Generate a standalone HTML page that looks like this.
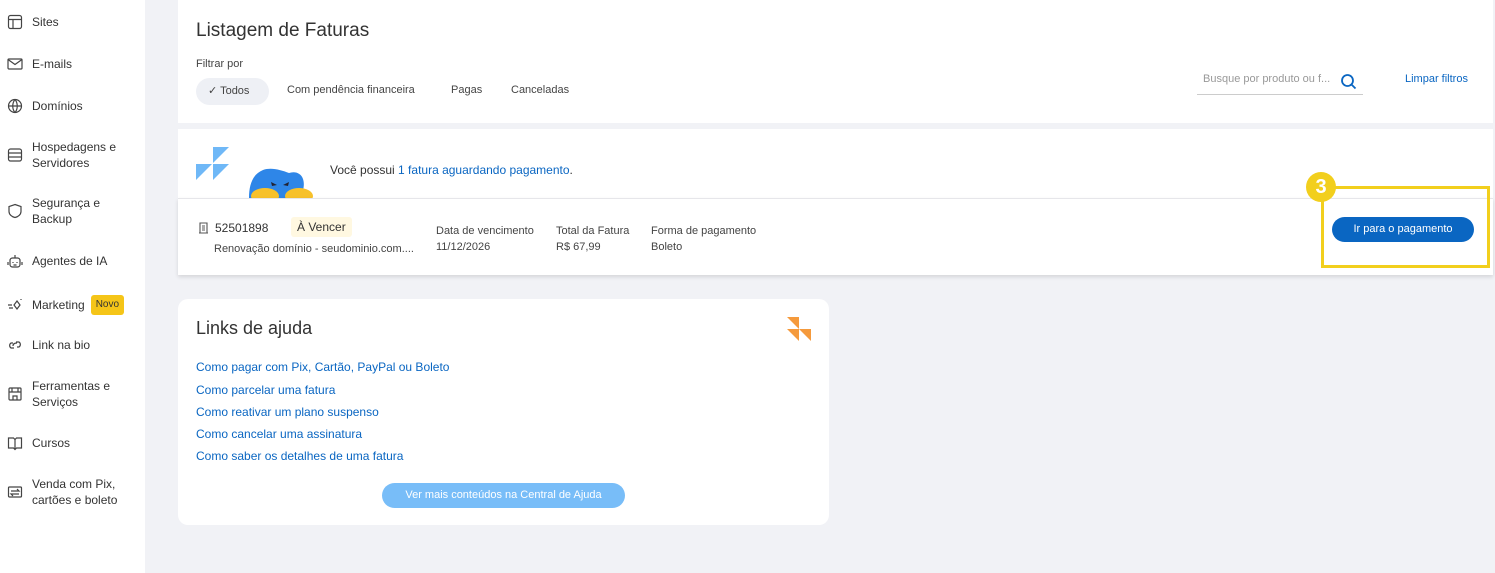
<!DOCTYPE html>
<html><head><meta charset="utf-8"><style>
*{box-sizing:border-box;margin:0;padding:0}
body{width:1495px;height:573px;overflow:hidden;background:#f1f2f6;font-family:"Liberation Sans",sans-serif;color:#3a3a4a;position:relative}
.side{position:absolute;left:0;top:0;width:145px;height:573px;background:#fff}
.it{position:absolute;left:7px;display:flex;align-items:center;font-size:12px;color:#333;line-height:16px}
.it svg{width:16px;height:16px;margin-right:9px;flex:none}
.abs{position:absolute}
.card{position:absolute;background:#fff}
a{color:#0a66c2;text-decoration:none}
.lk{position:absolute;left:196px;font-size:12px;color:#0a66c2}
.sm{font-size:11px;color:#444}
</style></head><body>
<div class="side">
<div class="it" style="top:14px"><svg viewBox="0 0 16 16" fill="none" stroke="#444" stroke-width="1.2"><rect x="1.5" y="1.5" width="13" height="13" rx="2"/><path d="M1.5 5.5h13M6 5.5v9"/></svg>Sites</div>
<div class="it" style="top:56px"><svg viewBox="0 0 16 16" fill="none" stroke="#444" stroke-width="1.2"><rect x="1" y="3" width="14" height="10" rx="1"/><path d="M1 3.5l7 5 7-5"/></svg>E-mails</div>
<div class="it" style="top:98px"><svg viewBox="0 0 16 16" fill="none" stroke="#444" stroke-width="1.2"><circle cx="8" cy="8" r="6.5"/><path d="M1.5 8h13M8 1.5c-3 3.5-3 9.5 0 13M8 1.5c3 3.5 3 9.5 0 13"/></svg>Domínios</div>
<div class="it" style="top:139px"><svg viewBox="0 0 16 16" fill="none" stroke="#444" stroke-width="1.2"><rect x="1.5" y="2" width="13" height="12" rx="2"/><path d="M1.5 6h13M1.5 10h13"/></svg>Hospedagens e<br>Servidores</div>
<div class="it" style="top:195px"><svg viewBox="0 0 16 16" fill="none" stroke="#444" stroke-width="1.2"><path d="M8 1.5l6 2v5c0 3-3 5.5-6 6-3-.5-6-3-6-6v-5z"/></svg>Segurança e<br>Backup</div>
<div class="it" style="top:253px"><svg viewBox="0 0 16 16" fill="none" stroke="#444" stroke-width="1.2"><rect x="3" y="5" width="10" height="9" rx="2.5"/><path d="M8 5V2M1 9v3M15 9v3M6 9v1M10 9v1M6.5 12h3"/></svg>Agentes de IA</div>
<div class="it" style="top:295px"><svg viewBox="0 0 16 16" fill="none" stroke="#444" stroke-width="1.2"><path d="M1 8h4M2 11h4M10 4l3 4-3 4-3-4zM14 2v1"/></svg>Marketing<span style="background:#f5c518;font-size:10px;padding:2px 5px;border-radius:3px;margin-left:6px">Novo</span></div>
<div class="it" style="top:337px"><svg viewBox="0 0 16 16" fill="none" stroke="#444" stroke-width="1.2"><path d="M6 6h-2a3 3 0 000 5h3M10 10h2a3 3 0 000-5H9M6 9c0-2 1-3 4-3"/></svg>Link na bio</div>
<div class="it" style="top:378px"><svg viewBox="0 0 16 16" fill="none" stroke="#444" stroke-width="1.2"><rect x="2" y="2" width="12" height="12" rx="1"/><path d="M2 6h12M6 14v-4h4v4M5 2v4M11 2v4"/></svg>Ferramentas e<br>Serviços</div>
<div class="it" style="top:435px"><svg viewBox="0 0 16 16" fill="none" stroke="#444" stroke-width="1.2"><path d="M1.5 3h5l1.5 1.5L9.5 3h5v10h-5L8 14.5 6.5 13h-5zM8 4.5v10"/></svg>Cursos</div>
<div class="it" style="top:476px"><svg viewBox="0 0 16 16" fill="none" stroke="#444" stroke-width="1.2"><rect x="1.5" y="3" width="13" height="10" rx="1"/><path d="M4 7h8l-2-2M12 10H4l2 2"/></svg>Venda com Pix,<br>cartões e boleto</div>
</div>

<div class="card" style="left:178px;top:0;width:1315px;height:123px"></div>
<div class="abs" style="left:196px;top:20px;font-size:19px;color:#333">Listagem de Faturas</div>
<div class="abs sm" style="left:196px;top:58px">Filtrar por</div>
<div class="abs" style="left:196px;top:78px;width:73px;height:27px;border-radius:14px;background:#eef0f5"></div>
<div class="abs sm" style="left:208px;top:84px">✓ Todos</div>
<div class="abs sm" style="left:287px;top:84px">Com pendência financeira</div>
<div class="abs sm" style="left:451px;top:84px">Pagas</div>
<div class="abs sm" style="left:511px;top:84px">Canceladas</div>
<div class="abs" style="left:1203px;top:73px;font-size:11px;color:#999">Busque por produto ou f...</div>
<svg class="abs" style="left:1340px;top:73px" width="17" height="17" viewBox="0 0 17 17" fill="none" stroke="#0a66c2" stroke-width="1.8"><circle cx="7.5" cy="7.5" r="5.5"/><path d="M11.5 11.5l4 4"/></svg>
<div class="abs" style="left:1197px;top:94px;width:166px;height:1px;background:#ccc"></div>
<div class="abs" style="left:1405px;top:73px;font-size:11px;color:#0a66c2">Limpar filtros</div>

<div class="card" style="left:178px;top:129px;width:1315px;height:69px"></div>
<svg class="abs" style="left:196px;top:147px" width="34" height="34"><path d="M17 0H33L17 16z" fill="#6fb8f7"/><path d="M0 17H16L0 33z" fill="#6fb8f7"/><path d="M17 17H33L17 33z" fill="#6fb8f7"/></svg>
<svg class="abs" style="left:245px;top:166px" width="70" height="32"><path d="M4 32C4 18 8 8 18 4c8-3 18 0 26 3 6-2 12 0 14 6 2 6 0 12-2 19z" fill="#2e86e8"/><ellipse cx="20" cy="30" rx="14" ry="8" fill="#f7c12b"/><ellipse cx="54" cy="30" rx="14" ry="8" fill="#f7c12b"/><path d="M26 16l6 3-5 1zM44 16l-6 3 5 1z" fill="#223"/></svg>
<div class="abs" style="left:330px;top:163px;font-size:12px;color:#333">Você possui <a>1 fatura aguardando pagamento</a>.</div>

<div class="card" style="left:178px;top:198px;width:1315px;height:77px;border-top:1px solid #e6e6ea;box-shadow:0 2px 4px rgba(0,0,0,.12)"></div>
<svg class="abs" style="left:198px;top:222px" width="11" height="12" fill="none" stroke="#555" stroke-width="1.1"><path d="M2 1h7v10H2zM1 11h9M4 4h3M4 6h3M4 8h3"/></svg>
<div class="abs" style="left:215px;top:221px;font-size:12px;color:#333">52501898</div>
<div class="abs" style="left:291px;top:217px;padding:3px 6px;background:#fff8e1;border-radius:3px;font-size:12px;color:#333">À Vencer</div>
<div class="abs sm" style="left:214px;top:243px">Renovação domínio - seudominio.com....</div>
<div class="abs sm" style="left:436px;top:223px;line-height:16px">Data de vencimento<br>11/12/2026</div>
<div class="abs sm" style="left:556px;top:223px;line-height:16px">Total da Fatura<br>R$ 67,99</div>
<div class="abs sm" style="left:651px;top:223px;line-height:16px">Forma de pagamento<br>Boleto</div>
<div class="abs" style="left:1332px;top:217px;width:142px;height:25px;border-radius:13px;background:#0a66c2;color:#fff;font-size:11px;text-align:center;line-height:25px">Ir para o pagamento</div>
<div class="abs" style="left:1321px;top:186px;width:169px;height:82px;border:3px solid #f2cf1d"></div>
<div class="abs" style="left:1306px;top:172px;width:30px;height:30px;border-radius:50%;background:#f2cf1d;color:#fff;font-weight:bold;font-size:20px;text-align:center;line-height:30px">3</div>

<div class="card" style="left:178px;top:299px;width:651px;height:226px;border-radius:10px"></div>
<div class="abs" style="left:196px;top:318px;font-size:18px;color:#333">Links de ajuda</div>
<svg class="abs" style="left:787px;top:317px" width="25" height="25"><path d="M0 0h12v12z M0 12h12v12z M12 12h12v12z" fill="#f59a3c"/></svg>
<div class="lk" style="top:360px">Como pagar com Pix, Cartão, PayPal ou Boleto</div>
<div class="lk" style="top:383px">Como parcelar uma fatura</div>
<div class="lk" style="top:405px">Como reativar um plano suspenso</div>
<div class="lk" style="top:427px">Como cancelar uma assinatura</div>
<div class="lk" style="top:449px">Como saber os detalhes de uma fatura</div>
<div class="abs" style="left:382px;top:483px;width:243px;height:25px;border-radius:13px;background:#78bdf8;color:#fff;font-size:11px;text-align:center;line-height:25px">Ver mais conteúdos na Central de Ajuda</div>
</body></html>
